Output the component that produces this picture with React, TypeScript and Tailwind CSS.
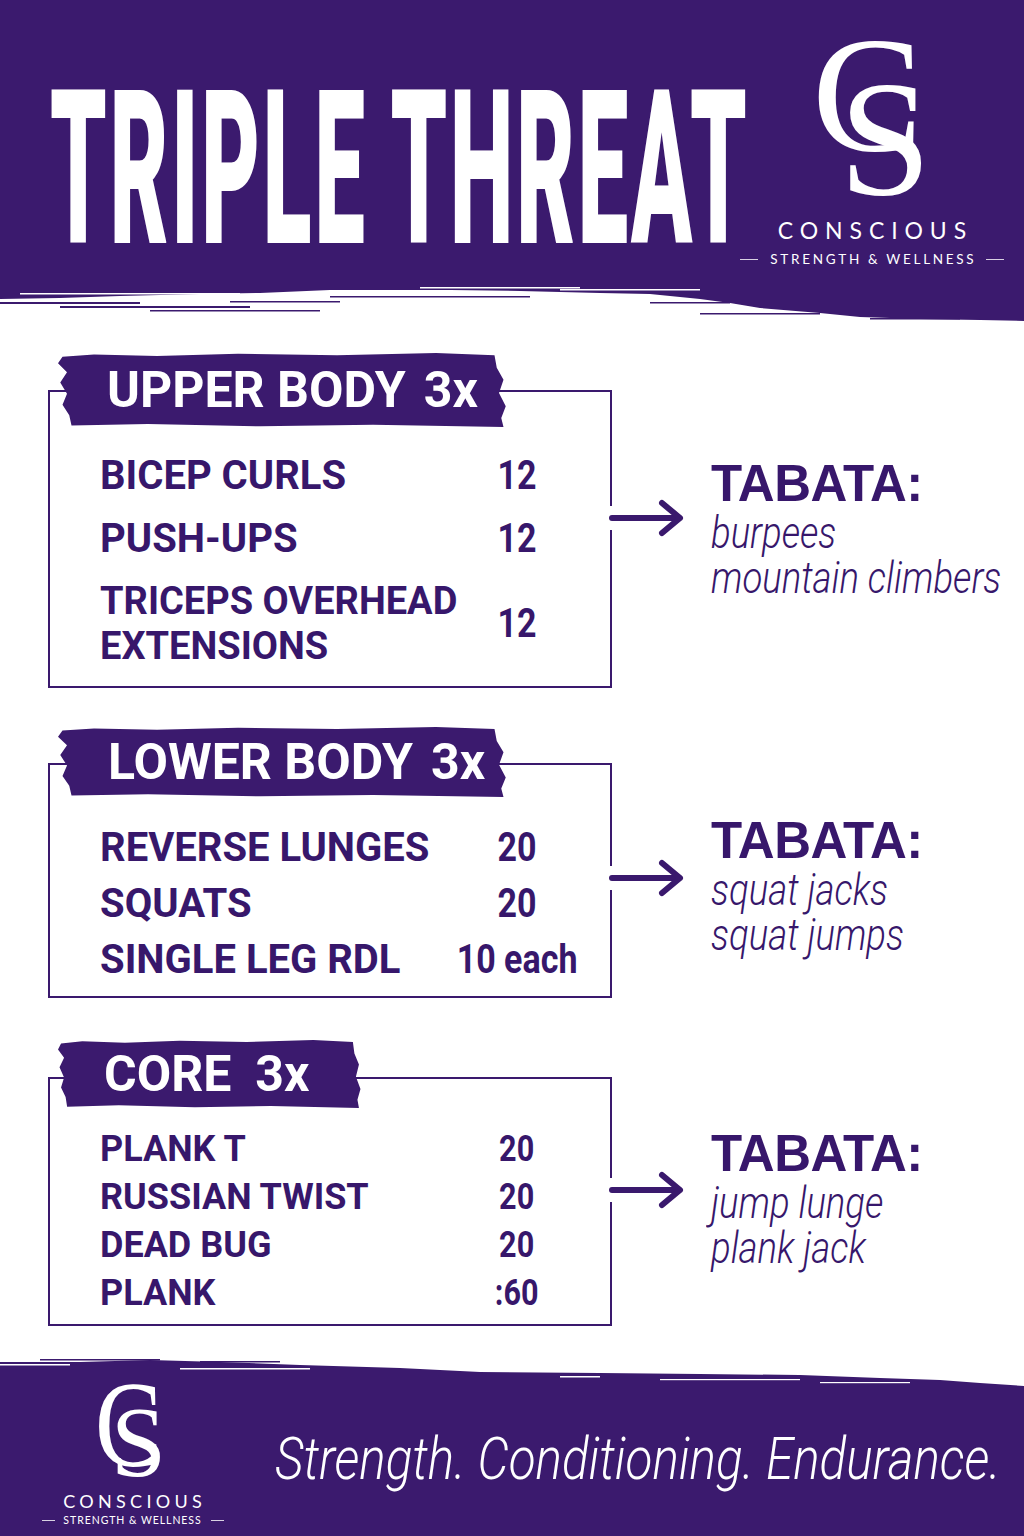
import React from 'react';

type Row = { name: React.ReactNode; reps: string };

function Arrow() {
  return (
    <svg width="80" height="40" viewBox="0 0 80 40" className="shrink-0">
      <rect x="3" y="8" width="11" height="24" fill="#ffffff" />
      <line x1="8" y1="20" x2="75" y2="20" stroke="#3a196d" strokeWidth="6" strokeLinecap="round" />
      <polyline points="58,5 76,20 58,35" fill="none" stroke="#3a196d" strokeWidth="6" strokeLinecap="round" strokeLinejoin="round" />
    </svg>
  );
}

function Label({ children, className }: { children: React.ReactNode; className: string }) {
  return (
    <div
      className={`relative z-10 ml-[10px] flex items-center bg-[#3b1a6e] text-white font-['Roboto',sans-serif] font-bold text-[50px] leading-none whitespace-nowrap [clip-path:polygon(1%_5%,8%_2%,22%_4%,40%_1%,62%_3%,84%_0%,97%_3%,97.5%_20%,99%_36%,98%_54%,99.5%_72%,98.5%_88%,99%_100%,70%_97%,45%_99%,20%_96%,3%_98%,2.5%_84%,1%_70%,2%_55%,0.5%_40%,2%_26%,0%_14%)] ${className}`}
    >
      {children}
    </div>
  );
}

function Tabata({ lines, className }: { lines: string[]; className: string }) {
  return (
    <div className={`ml-[27px] ${className}`}>
      <div className="font-['Liberation_Sans',sans-serif] font-bold text-[51px] leading-none tracking-[-0.01em] text-[#37176b]">
        TABATA:
      </div>
      <div className="mt-[2px] font-['Roboto',sans-serif] font-light italic text-[44px] leading-[45px] text-[#37176b] whitespace-nowrap">
        {lines.map((l) => (
          <div key={l} className="origin-left scale-x-[0.83]">
            {l}
          </div>
        ))}
      </div>
    </div>
  );
}

function Rows({ rows, className }: { rows: Row[]; className: string }) {
  return (
    <div className={`flex flex-col font-['Roboto',sans-serif] font-bold leading-[46px] text-[#37176b] ${className}`}>
      {rows.map((r, i) => (
        <div key={i} className="grid grid-cols-[362px_110px] items-center">
          <div className="whitespace-nowrap">{r.name}</div>
          <div className="flex justify-center whitespace-nowrap">
            <span className="inline-block scale-x-[0.85]">{r.reps}</span>
          </div>
        </div>
      ))}
    </div>
  );
}

function BrandMark({ small }: { small?: boolean }) {
  if (small) {
    return (
      <div className="relative h-[137px] w-[191px]">
        <span className="absolute left-[58px] top-[20px] origin-left scale-x-[0.82] font-['Liberation_Serif',serif] text-[122px] leading-[100px] text-white">
          C
        </span>
        <span className="absolute left-[74px] top-[47px] font-['Liberation_Serif',serif] text-[99px] leading-[80px] text-white">
          S
        </span>
      </div>
    );
  }
  return (
    <div className="relative h-[219px] w-[264px]">
      <span className="absolute left-[72px] top-[34px] font-['Liberation_Serif',serif] text-[166px] leading-[120px] text-white">
        C
      </span>
      <span className="absolute left-[99px] top-[78px] font-['Liberation_Serif',serif] text-[166px] leading-[120px] text-white">
        S
      </span>
    </div>
  );
}

export default function App() {
  return (
    <div className="w-[1024px] h-[1536px] overflow-hidden bg-white">
      {/* Header */}
      <header className="relative h-[325px] bg-[#3b1a6e]">
        <div className="flex">
          <div className="w-[740px] shrink-0 pl-[50px] pt-[64px]">
            <span className="inline-block origin-top-left scale-y-[2.39] font-['Roboto',sans-serif] font-black text-[90px] leading-none tracking-[0.032em] text-white whitespace-nowrap">
              TRIPLE THREAT
            </span>
          </div>
          <div className="flex w-[264px] shrink-0 flex-col items-center text-white">
            <BrandMark />
            <div className="font-['Lato',sans-serif] text-[23px] leading-none tracking-[0.3em] pl-[0.3em]">CONSCIOUS</div>
            <div className="mt-[11px] flex w-full items-center justify-between font-['Lato',sans-serif] text-[13.5px] leading-none tracking-[0.2em]">
              <span className="h-px w-[18px] bg-white/80" />
              <span className="pl-[0.2em]">STRENGTH &amp; WELLNESS</span>
              <span className="h-px w-[18px] bg-white/80" />
            </div>
          </div>
        </div>
        <svg className="absolute bottom-0 left-0 h-[45px] w-full" viewBox="0 0 1024 45" preserveAspectRatio="none">
          <polygon
            fill="#ffffff"
            points="0,19 60,18 120,16 200,14 260,13 330,10 400,10 450,10 520,11 600,13 650,14 700,19 730,23 760,28 820,33 860,37 920,39 980,40 1024,41 1024,45 0,45"
          />
          <rect x="0" y="22" width="140" height="2" fill="#3b1a6e" />
          <rect x="60" y="26" width="190" height="2" fill="#3b1a6e" />
          <rect x="150" y="30" width="170" height="1.5" fill="#3b1a6e" />
          <rect x="230" y="21" width="110" height="1.5" fill="#3b1a6e" />
          <rect x="330" y="16" width="200" height="1.5" fill="#3b1a6e" />
          <rect x="650" y="22" width="80" height="1.5" fill="#3b1a6e" />
          <rect x="700" y="33" width="120" height="1.5" fill="#3b1a6e" />
          <rect x="870" y="38" width="90" height="1.5" fill="#3b1a6e" />
          <rect x="20" y="13" width="220" height="1.5" fill="#ffffff" />
          <rect x="420" y="7" width="160" height="1.5" fill="#ffffff" />
          <rect x="560" y="9" width="140" height="1.5" fill="#ffffff" />
        </svg>
      </header>

      {/* Upper body */}
      <section className="ml-[48px] mt-[28px]">
        <Label className="h-[74px] w-[450px] pl-[49px]">
          UPPER BODY<span className="ml-[18px]">3x</span>
        </Label>
        <div className="-mt-[37px] flex">
          <div className="h-[298px] w-[564px] shrink-0 border-2 border-[#3a196d] pl-[50px] pt-[61px]">
            <Rows
              className="gap-[17px] text-[40px]"
              rows={[
                { name: 'BICEP CURLS', reps: '12' },
                { name: 'PUSH-UPS', reps: '12' },
                {
                  name: (
                    <span className="block text-[38px] leading-[45px]">
                      TRICEPS OVERHEAD
                      <br />
                      EXTENSIONS
                    </span>
                  ),
                  reps: '12',
                },
              ]}
            />
          </div>
          <div className="flex items-start">
            <div className="-ml-[8px] mt-[108px]">
              <Arrow />
            </div>
            <Tabata className="mt-[68px]" lines={['burpees', 'mountain climbers']} />
          </div>
        </div>
      </section>

      {/* Lower body */}
      <section className="ml-[48px] mt-[39px]">
        <Label className="h-[70px] w-[450px] pl-[50px]">
          LOWER BODY<span className="ml-[18px]">3x</span>
        </Label>
        <div className="-mt-[34px] flex">
          <div className="h-[235px] w-[564px] shrink-0 border-2 border-[#3a196d] pl-[50px] pt-[60px]">
            <Rows
              className="gap-[10px] text-[40px]"
              rows={[
                { name: 'REVERSE LUNGES', reps: '20' },
                { name: 'SQUATS', reps: '20' },
                { name: 'SINGLE LEG RDL', reps: '10 each' },
              ]}
            />
          </div>
          <div className="flex items-start">
            <div className="-ml-[8px] mt-[95px]">
              <Arrow />
            </div>
            <Tabata className="mt-[52px]" lines={['squat jacks', 'squat jumps']} />
          </div>
        </div>
      </section>

      {/* Core */}
      <section className="ml-[48px] mt-[42px]">
        <Label className="h-[68px] w-[304px] pl-[46px]">
          CORE<span className="ml-[24px]">3x</span>
        </Label>
        <div className="-mt-[31px] flex">
          <div className="h-[249px] w-[564px] shrink-0 border-2 border-[#3a196d] pl-[50px] pt-[47px]">
            <Rows
              className="gap-[2px] text-[36px]"
              rows={[
                { name: 'PLANK T', reps: '20' },
                { name: 'RUSSIAN TWIST', reps: '20' },
                { name: 'DEAD BUG', reps: '20' },
                { name: 'PLANK', reps: ':60' },
              ]}
            />
          </div>
          <div className="flex items-start">
            <div className="-ml-[8px] mt-[93px]">
              <Arrow />
            </div>
            <Tabata className="mt-[51px]" lines={['jump lunge', 'plank jack']} />
          </div>
        </div>
      </section>

      {/* Footer */}
      <footer className="relative mt-[29px] h-[181px] bg-[#3b1a6e]">
        <svg className="absolute left-0 top-0 h-[40px] w-full" viewBox="0 0 1024 40" preserveAspectRatio="none">
          <polygon
            fill="#ffffff"
            points="0,0 1024,0 1024,31 980,28 940,25 880,23 800,20 700,19 600,18 480,17 400,13 300,10 220,7 150,5 80,7 0,7"
          />
          <rect x="0" y="9" width="70" height="1.5" fill="#ffffff" />
          <rect x="180" y="13" width="130" height="1.5" fill="#ffffff" />
          <rect x="560" y="21" width="40" height="1.5" fill="#ffffff" />
          <rect x="660" y="24" width="140" height="1.2" fill="#ffffff" />
          <rect x="820" y="27" width="90" height="1.2" fill="#ffffff" />
          <rect x="40" y="4" width="120" height="1.5" fill="#3b1a6e" />
          <rect x="200" y="6" width="80" height="1.5" fill="#3b1a6e" />
        </svg>
        <div className="relative flex">
          <div className="ml-[37px] flex w-[191px] shrink-0 flex-col items-center text-white">
            <BrandMark small />
            <div className="font-['Lato',sans-serif] text-[18px] leading-none tracking-[0.24em] pl-[0.24em]">CONSCIOUS</div>
            <div className="mt-[5px] flex w-[182px] items-center justify-between font-['Lato',sans-serif] text-[10.5px] leading-none tracking-[0.09em]">
              <span className="h-px w-[13px] bg-white/80" />
              <span>STRENGTH &amp; WELLNESS</span>
              <span className="h-px w-[13px] bg-white/80" />
            </div>
          </div>
          <div className="ml-[47px] mt-[74px] origin-left scale-x-[0.824] whitespace-nowrap font-['Roboto',sans-serif] font-light italic text-[60px] leading-none text-white">
            Strength. Conditioning. Endurance.
          </div>
        </div>
      </footer>
    </div>
  );
}
